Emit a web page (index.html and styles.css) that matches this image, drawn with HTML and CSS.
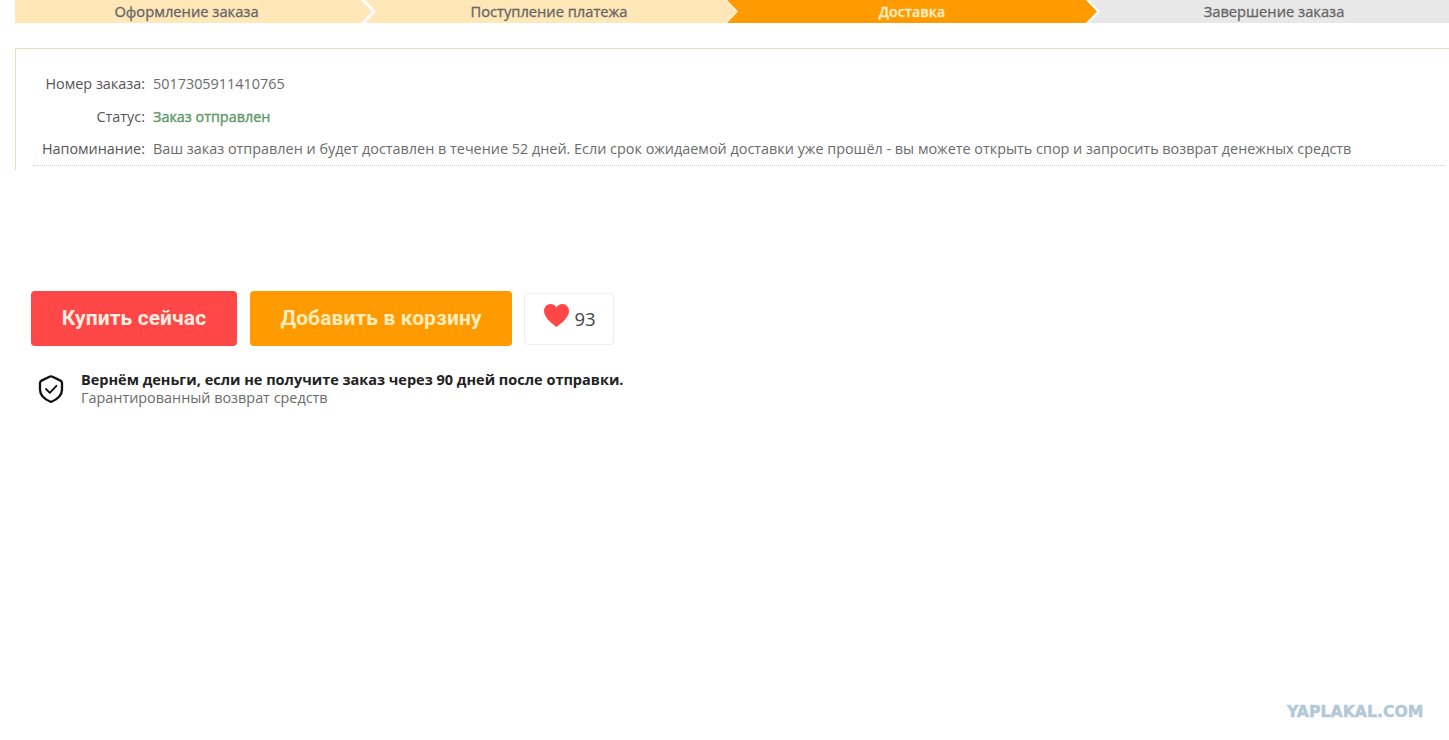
FILE: index.html
```html
<!DOCTYPE html>
<html lang="ru">
<head>
  <meta charset="UTF-8" />
  <title>Заказ</title>
  <link rel="stylesheet" href="styles.css">
</head>
<body>

  <div class="steps">
    <div class="step step-first">Оформление заказа</div>
    <div class="step step-second">Поступление платежа</div>
    <div class="step step-active">Доставка</div>
    <div class="step step-last">Завершение заказа</div>
  </div>

  <div class="order">
    <div class="order-rows">
      <div class="row">
        <span class="label">Номер заказа:</span>
        <span class="value">5017305911410765</span>
      </div>
      <div class="row">
        <span class="label">Статус:</span>
        <span class="value status">Заказ отправлен</span>
      </div>
      <div class="row">
        <span class="label">Напоминание:</span>
        <span class="value">Ваш заказ отправлен и будет доставлен в течение 52 дней. Если срок ожидаемой доставки уже прошёл - вы можете открыть спор и запросить возврат денежных средств</span>
      </div>
    </div>
  </div>

  <div class="actions">
    <button class="btn btn-buy">Купить сейчас</button>
    <button class="btn btn-cart">Добавить в корзину</button>
    <div class="wish">
      <svg class="heart" viewBox="0 0 25 23" width="25" height="23">
        <path d="M12.5 23C10 20.6 0 14.6 0 7 0 3 3 0 6.6 0 9.2 0 11.3 1.3 12.5 3.5 13.7 1.3 15.8 0 18.4 0 22 0 25 3 25 7 25 14.6 15 20.6 12.5 23Z" fill="#ff4747"/>
      </svg>
      <span class="wish-count">93</span>
    </div>
  </div>

  <div class="guarantee">
    <svg class="shield" viewBox="0 0 26 30" width="26" height="30">
      <path d="M11.5 2.7C12.5 2.2 13.5 2.2 14.5 2.7L22.5 6.6C23.5 7.1 24 7.9 24 9V15.5C24 21.2 19.5 25.3 13 28 6.5 25.3 2 21.2 2 15.5V9C2 7.9 2.5 7.1 3.5 6.6Z" fill="none" stroke="#111" stroke-width="2.3" stroke-linejoin="round"/>
      <path d="M8 15 11.8 18.8 18.4 11.8" fill="none" stroke="#111" stroke-width="1.8" stroke-linecap="round" stroke-linejoin="round"/>
    </svg>
    <div class="guarantee-text">
      <div class="guarantee-title">Вернём деньги, если не получите заказ через 90 дней после отправки.</div>
      <div class="guarantee-sub">Гарантированный возврат средств</div>
    </div>
  </div>

  <div class="watermark">YAPLAKAL.COM</div>

</body>
</html>
```

FILE: styles.css
```css
body {
  margin: 0;
  background: white;
  height: 740px;
  overflow: hidden;
  position: relative;
  font-family: "Open Sans", sans-serif;
  font-size: 14.4px;
  color: #6b6b6b;
}

.steps {
  display: flex;
  height: 23px;
  margin-left: 15px;
}

.step {
  line-height: 23px;
  text-align: center;
  font-size: 14.7px;
  -webkit-text-stroke: 0.3px;
  color: #666;
  background: #ffe7b8;
  clip-path: polygon(0 0, calc(100% - 11px) 0, 100% 50%, calc(100% - 11px) 100%, 0 100%, 11px 50%);
}

.step-first {
  width: 357px;
  padding-right: 14px;
  box-sizing: border-box;
  margin-right: -7px;
  clip-path: polygon(0 0, calc(100% - 11px) 0, 100% 50%, calc(100% - 11px) 100%, 0 100%);
}

.step-second {
  width: 372px;
  box-sizing: border-box;
  padding-right: 4px;
  margin-right: -10px;
}

.step-active {
  width: 370px;
  margin-right: -8px;
  font-size: 14.2px;
  color: #ffeec4;
  font-weight: 600;
  background: #ff9a00;
}

.step-last {
  flex: 1;
  padding-left: 10px;
  background: #e8e8e8;
  clip-path: polygon(0 0, 100% 0, 100% 100%, 0 100%, 11px 50%);
}

.order {
  margin: 25px 0 0 15px;
  border-top: 1px solid #ebdcb9;
  border-left: 1px solid #ebdcb9;
  height: 121px;
  padding-left: 17px;
  padding-right: 4px;
}

.order-rows {
  padding-top: 19px;
  height: 97px;
  border-bottom: 1px dotted #ccc;
}

.row {
  display: flex;
  gap: 8px;
  height: 32.5px;
  line-height: 32px;
}

.label {
  width: 112px;
  text-align: right;
  color: #555;
  white-space: nowrap;
}

.value {
  white-space: nowrap;
}

.status {
  color: #5f9a6b;
  -webkit-text-stroke: 0.4px;
}

.actions {
  display: flex;
  align-items: center;
  margin: 121px 0 0 31px;
}

.btn {
  height: 55px;
  border: 0;
  border-radius: 4px;
  font-family: Roboto, sans-serif;
  font-size: 21px;
  font-weight: 700;
  letter-spacing: 0.1px;
  color: #ffeee0;
  padding-bottom: 2px;
}

.btn-buy {
  width: 206px;
  background: #ff4747;
}

.btn-cart {
  width: 262px;
  margin-left: 13px;
  color: #ffedbb;
  background: #ff9a00;
}

.wish {
  display: flex;
  align-items: center;
  justify-content: center;
  gap: 5px;
  box-sizing: border-box;
  width: 90px;
  height: 52px;
  margin-left: 12px;
  padding-left: 2px;
  border: 1px solid #eee;
  border-radius: 4px;
}

.heart {
  margin-top: -6px;
}

.wish-count {
  font-size: 18.5px;
  color: #444;
}

.guarantee {
  display: flex;
  align-items: center;
  gap: 17px;
  margin: 25px 0 0 38px;
}

.guarantee-text {
  line-height: 18px;
}

.guarantee-title {
  font-size: 14.5px;
  font-weight: 700;
  color: #222;
}

.watermark {
  position: absolute;
  left: 1287px;
  top: 702px;
  font-family: "DejaVu Sans", sans-serif;
  font-size: 15.7px;
  font-weight: 700;
  -webkit-text-stroke: 0.5px;
  color: #b4c9d8;
}
```
